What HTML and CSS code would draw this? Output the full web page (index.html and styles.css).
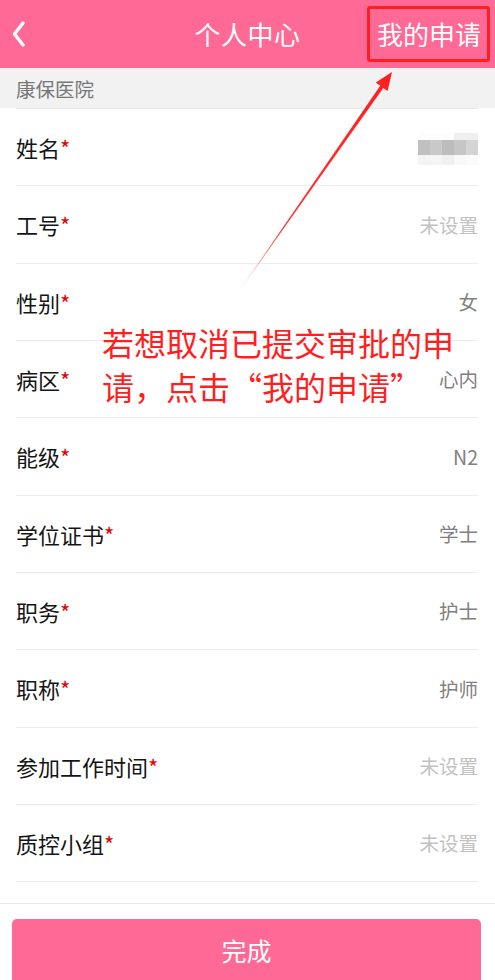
FILE: index.html
```html
<!DOCTYPE html>
<html lang="zh-CN">
<head>
<meta charset="utf-8">
<title>个人中心</title>
<link rel="stylesheet" href="styles.css">
</head>
<body>
<div class="page">
  <header class="navbar">
    <div class="nav-left">
      <svg class="back" width="16" height="26" viewBox="0 0 16 26"><path d="M11 2 L2.5 13 L11 24" fill="none" stroke="#fff" stroke-width="3.4" stroke-linecap="round" stroke-linejoin="round"/></svg>
    </div>
    <div class="nav-title">个人中心</div>
    <div class="nav-right">我的申请</div>
  </header>

  <div class="section-title">康保医院</div>

  <ul class="form-list">
    <li class="row"><span class="label">姓名<i class="req">*</i></span>
      <span class="blur">
        <b class="c1"></b><b class="c1"></b><b class="c1"></b><b class="c2"></b><b class="c2"></b>
        <b class="m1"></b><b class="m2"></b><b class="m3"></b><b class="m4"></b><b class="m5"></b>
        <b class="l1"></b><b class="l2"></b><b class="l3"></b><b class="l4"></b><b class="l5"></b>
      </span>
    </li>
    <li class="row"><span class="label">工号<i class="req">*</i></span><span class="value unset">未设置</span></li>
    <li class="row"><span class="label">性别<i class="req">*</i></span><span class="value">女</span></li>
    <li class="row"><span class="label">病区<i class="req">*</i></span><span class="value">心内</span></li>
    <li class="row"><span class="label">能级<i class="req">*</i></span><span class="value">N2</span></li>
    <li class="row"><span class="label">学位证书<i class="req">*</i></span><span class="value">学士</span></li>
    <li class="row"><span class="label">职务<i class="req">*</i></span><span class="value">护士</span></li>
    <li class="row"><span class="label">职称<i class="req">*</i></span><span class="value">护师</span></li>
    <li class="row"><span class="label">参加工作时间<i class="req">*</i></span><span class="value unset">未设置</span></li>
    <li class="row"><span class="label">质控小组<i class="req">*</i></span><span class="value unset">未设置</span></li>
  </ul>

  <div class="spacer"></div>

  <footer class="footer">
    <button class="done-btn">完成</button>
  </footer>

  <!-- annotation overlay -->
  <div class="mark-box"></div>
  <svg class="arrow" width="495" height="980" viewBox="0 0 495 980">
    <defs>
      <linearGradient id="fade" gradientUnits="userSpaceOnUse" x1="233" y1="300" x2="392" y2="72">
        <stop offset="0" stop-color="#ff1f1f" stop-opacity="0"/>
        <stop offset="0.3" stop-color="#ff1f1f" stop-opacity="0.9"/>
        <stop offset="1" stop-color="#ff1f1f" stop-opacity="1"/>
      </linearGradient>
    </defs>
    <polygon points="233,300 383.3,88 387.6,91 392,72 375.8,82.6 380.2,85.8" fill="url(#fade)"/>
  </svg>
  <div class="note">若想取消已提交审批的申<br>请，点击“我的申请”</div>
</div>
</body>
</html>
```

FILE: styles.css
```css
* { box-sizing: border-box; margin: 0; padding: 0; }

html, body {
  width: 495px;
  height: 980px;
  overflow: hidden;
  background: #fff;
}

body {
  font-family: "Noto Sans CJK SC", "Noto Sans", sans-serif;
  color: #1a1a1a;
}

.page {
  position: relative;
  width: 495px;
  height: 980px;
  display: flex;
  flex-direction: column;
}

.navbar {
  height: 68px;
  background: #ff6995;
  display: grid;
  grid-template-columns: 1fr auto 1fr;
  align-items: center;
  color: #fff;
  flex: none;
}

.nav-left {
  padding-left: 12px;
  display: flex;
  align-items: center;
}

.back { display: block; }

.nav-title {
  font-size: 26px;
  line-height: 1;
  letter-spacing: 0.5px;
}

.nav-right {
  justify-self: end;
  padding-right: 14px;
  font-size: 26px;
  line-height: 1;
}

.section-title {
  height: 40px;
  background: #f2f2f2;
  padding-left: 16px;
  display: flex;
  align-items: center;
  font-size: 19.5px;
  color: #777;
  flex: none;
}

.form-list {
  list-style: none;
  margin: 0 17px 0 16px;
  border-top: 1px solid #e8e8e8;
  flex: none;
}

.row {
  height: 77.33px;
  border-bottom: 1px solid #ececec;
  display: flex;
  align-items: center;
  justify-content: space-between;
}

.label {
  font-size: 22px;
  color: #151515;
  line-height: 1;
}

.req {
  font-style: normal;
  color: #e30000;
  font-size: 22px;
}

.value {
  font-size: 19.5px;
  color: #808080;
  line-height: 1;
}

.value.unset { color: #c2c2c2; }

.blur {
  display: grid;
  grid-template-columns: repeat(5, 12px);
  grid-template-rows: 7px 15px 10px;
  margin-top: 4px;
}
.blur b { display: block; }
.c1 { background: #fdfdfd; }
.c2 { background: #efefef; }
.m1 { background: #c0c0c0; }
.m2 { background: #c9c9c9; }
.m3 { background: #bdbdbd; }
.m4 { background: #c6c6c6; }
.m5 { background: #d4d4d4; }
.l1 { background: #f4f4f4; }
.l2 { background: #f5f5f5; }
.l3 { background: #f0f0f0; }
.l4 { background: #f8f8f8; }
.l5 { background: #fbfbfb; }

.spacer { flex: 1; }

.footer {
  height: 77px;
  border-top: 1px solid #e6e6e6;
  padding: 15px 14px 0 12px;
  flex: none;
}

.done-btn {
  width: 100%;
  height: 70px;
  border: none;
  border-radius: 5px;
  background: #ff6995;
  color: #fff;
  font-family: "Noto Sans CJK SC", "Noto Sans", sans-serif;
  font-size: 25px;
  padding-bottom: 8px;
}

/* annotation overlay */
.mark-box {
  position: absolute;
  left: 367px;
  top: 6px;
  width: 123px;
  height: 56px;
  border: 3px solid #ff1f1f;
  border-radius: 3px;
}

.arrow {
  position: absolute;
  left: 0;
  top: 0;
  pointer-events: none;
}

.note {
  position: absolute;
  left: 102px;
  top: 320px;
  font-size: 32px;
  line-height: 44px;
  color: #ff1f1f;
  white-space: nowrap;
}
```
